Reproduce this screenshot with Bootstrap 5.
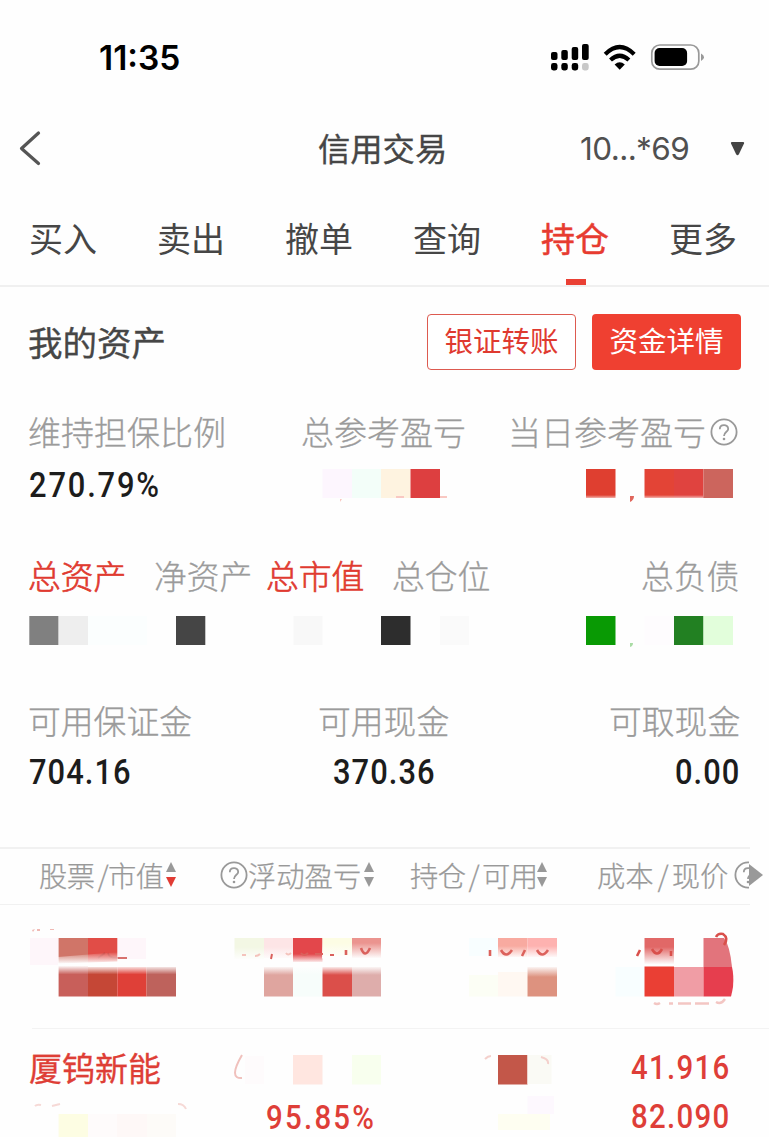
<!DOCTYPE html>
<html lang="zh-CN">
<head>
<meta charset="utf-8">
<meta name="viewport" content="width=device-width, initial-scale=1">
<title>信用交易</title>
<link href="https://cdn.jsdelivr.net/npm/bootstrap@5.3.0/dist/css/bootstrap.min.css" rel="stylesheet">
<style>
  body { font-family: "Noto Sans CJK SC", sans-serif; background: #fefefe; color: #464646; height: 1137px; overflow: hidden; line-height: 1.2; }
  svg { display: block; flex: none; }
  .status { height: 116px; padding: 0 64px 0 99px; color: #000; }
  .clock { font: 600 33.5px/1 Inter, sans-serif; letter-spacing: 0; padding-top: 2px; }
  .topbar { height: 64px; display: grid; grid-template-columns: 318px 262px 150px 1fr; align-items: center; }
  .topbar h1 { font-size: 32.3px; margin: 0; font-weight: 400; -webkit-text-stroke: .35px; line-height: 1.2; padding-bottom: 2px; }
  .account { font: 400 31.5px/1 Inter, sans-serif; letter-spacing: -.6px; padding-top: 2px; color: #505050; }
  .tabs { height: 107px; padding: 12px 0 0 29px; border-bottom: 2px solid #f0f0f0; font-size: 34px; display: grid; grid-template-columns: repeat(6, 128px); align-items: center; }
  .tabs a { color: inherit; text-decoration: none; position: relative; white-space: nowrap; }
  .tabs a.active { color: #e73b30; -webkit-text-stroke: .5px; }
  .tabs a.active::after { content: ""; position: absolute; left: 25px; top: 61px; width: 20px; height: 6px; background: #ea4034; }
  .asset-head { height: 109px; padding: 0 28px 0 28px; }
  .asset-head h2 { font-size: 34.5px; margin: 0; font-weight: 400; -webkit-text-stroke: .35px; }
  .btn-act { height: 56px; width: 149px; font-size: 28.5px; line-height: 1; padding: 0 0 2px; border-radius: 4px; white-space: nowrap; }
  .btn-line { border: 1px solid #dd5a50; color: #df3a30; background: #fff; }
  .btn-fill { border: 0; color: #fff; background: #ef4031; }
  .labels { display: grid; align-items: center; font-size: 33px; font-weight: 300; -webkit-text-stroke: .3px; color: #9b9b9b; white-space: nowrap; height: 48px; }
  .labels .on { color: #e03a30; -webkit-text-stroke: .65px; }
  .l1 { height: 72px; grid-template-columns: 28px 273px 207px 1fr; }
  .l2 { margin-top: 51px; padding-bottom: 5px; grid-template-columns: 28px 126px 112px 126px 249px 1fr; font-size: 32.8px; }
  .l3 { margin-top: 38px; padding-bottom: 3px; grid-template-columns: 28px 290px 291px 1fr; font-size: 32.8px; }
  .num { font-family: Roboto, sans-serif; font-weight: 500; font-size: 35.5px; line-height: 1; letter-spacing: 1.2px; color: #1c1c1c; display: inline-block; transform: scaleX(.87); transform-origin: 0 50%; white-space: nowrap; }
  .num.pct { letter-spacing: 2.1px; }
  .num.red { color: #de3e38; font-size: 33.8px; letter-spacing: 1.5px; }
  .num.red.pct { letter-spacing: 2.6px; }
  .v1 { height: 34px; display: grid; grid-template-columns: 29px 264px 1fr; align-items: center; }
  .v3 { height: 56px; display: grid; grid-template-columns: 29px 304px 342px 1fr; align-items: center; }
  .thead-line { margin-top: 46px; height: 58px; width: 750px; border-top: 2px solid #f1f1f1; border-bottom: 1px solid #f1f1f1; display: grid; grid-template-columns: 39px 181px 190px 187px 170px; align-items: center; padding-bottom: 3px; font-size: 28.3px; font-weight: 300; -webkit-text-stroke: .25px; color: #999; white-space: nowrap; }
  .thead-line .sl { margin: 0 3px 0 4px; }
  .tight .sl { margin: 0 0 0 3px; }
  .tight { letter-spacing: -.6px; }
  .sorter { margin-left: 3px; }
  .hold-a { height: 124px; }
  .rule { height: 1px; margin-left: 32px; background: #f3f3f3; }
  .hold-b { display: grid; grid-template-columns: 29px 201px 401px 1fr; height: 108px; }
  .stock { font-size: 33px; color: #de3e36; -webkit-text-stroke: .3px; white-space: nowrap; line-height: 40px; padding-top: 18px; height: 60px; }
</style>
</head>
<body>
<svg width="0" height="0" class="position-absolute" aria-hidden="true">
  <defs>
    <symbol id="help" viewBox="0 0 28 28"><g fill="none" stroke="#999" stroke-width="1.8"><circle cx="14" cy="14" r="12.6"/><path d="M9.8 11.2C9.8 5.8 18.2 5.8 18.2 10.9C18.2 13.7 14 14 14 18"/></g><circle cx="14" cy="21" r="1.3" fill="#999"/></symbol>
    <symbol id="up" viewBox="0 0 10 10"><path d="M5 0L10 10H0Z"/></symbol>
    <symbol id="down" viewBox="0 0 10 10"><path d="M0 0H10L5 10Z"/></symbol>
    <linearGradient id="fadeTop" x2="0" y2="1"><stop offset="0" stop-color="#fefefe"/><stop offset="1" stop-color="#fefefe" stop-opacity="0"/></linearGradient>
    <linearGradient id="fadeBottom" x2="0" y2="1"><stop offset="0" stop-color="#fefefe" stop-opacity="0"/><stop offset="1" stop-color="#fefefe"/></linearGradient>
  </defs>
</svg>

<header>
  <div class="status d-flex align-items-center justify-content-between">
    <span class="clock">11:35</span>
    <svg width="155" height="32" viewBox="550 42 155 32">
      <g><rect x="551" y="52" width="6.5" height="8" rx="2"/><rect x="561.3" y="50" width="6.5" height="10" rx="2"/><rect x="571.7" y="47" width="6.5" height="13" rx="2"/><rect x="582" y="44" width="6.7" height="16" rx="2"/>
      <rect x="551" y="63" width="6.5" height="7.5" rx="2.4"/><rect x="561.3" y="63" width="6.5" height="7.5" rx="2.4"/><rect x="571.7" y="63" width="6.5" height="7.5" rx="2.4"/><rect x="582" y="63" width="6.7" height="7.5" rx="2.4" fill="#c8c8c8"/></g>
      <g fill="none" stroke="#000" stroke-width="4.2"><path d="M605.2 54.2Q619.7 39.8 634.2 54.2"/><path d="M610.5 60Q619.7 51.5 628.9 60"/></g>
      <path d="M614.6 64.5Q619.7 60.2 624.8 64.5L619.7 69.7Z"/>
      <rect x="651.8" y="45" width="47" height="24.2" rx="8" fill="none" stroke="#999" stroke-width="1.7"/>
      <rect x="654.6" y="48" width="32.5" height="18" rx="5"/>
      <path d="M701 53.5Q704 55 704 57.2T701 61Z" fill="#999"/>
    </svg>
  </div>
  <div class="topbar">
    <svg width="50" height="40" viewBox="0 128 50 40"><path d="M38.5 133L21.5 148.5L38.5 163.5" fill="none" stroke="#555" stroke-width="3.2" stroke-linejoin="round" stroke-linecap="round"/></svg>
    <h1>信用交易</h1>
    <span class="account">10...*69</span>
    <svg width="15" height="15" viewBox="0 0 15 15"><path d="M2 1H13Q14.5 1 14 2.5L9 13Q7.500 15.500 6 13L1 2.500Q.5 1 2 1Z" fill="#444"/></svg>
  </div>
  <nav class="tabs">
    <a href="#">买入</a><a href="#">卖出</a><a href="#">撤单</a><a href="#">查询</a><a href="#" class="active">持仓</a><a href="#">更多</a>
  </nav>
</header>

<main>
  <section>
    <div class="asset-head d-flex align-items-center">
      <h2 class="me-auto">我的资产</h2>
      <button class="btn btn-act btn-line me-3">银证转账</button>
      <button class="btn btn-act btn-fill">资金详情</button>
    </div>

    <div class="labels l1"><i></i><span>维持担保比例</span><span>总参考盈亏</span><span class="d-flex align-items-center">当日参考盈亏<svg class="ms-1" width="28" height="28"><use href="#help"/></svg></span></div>
    <div class="v1"><i></i><span class="num pct">270.79%</span>
      <svg width="476" height="34" viewBox="293 469 476 34">
        <path fill="#fdf6fe" d="M322.500 469h29.500v29h-29.500z"/><path fill="#f3fef9" d="M352 469h29v29h-29z"/><path fill="#fef3e0" d="M381 469h29.500v29H381z"/><path fill="#dd3f40" d="M410.500 469H440v29h-29.500z"/>
        <path fill="#f9c8c2" d="M396 496h8v2h-8zM440 496h7v2h-7zM340 499l2 0-2 3z"/>
        <path fill="#df3f30" d="M586 469h29.500v29H586z"/><path fill="#e34436" d="M644.500 469h30v29h-30z"/><path fill="#e0433f" d="M674 469h29.500v29h-29.500z"/><path fill="#cc655d" d="M703.500 469H733v29h-29.500z"/>
        <path fill="url(#fadeBottom)" opacity=".6" d="M586 495h117v3H586z"/>
        <path fill="#e0665c" d="M630 496h4q0 4-4 6z"/>
      </svg>
    </div>

    <div class="labels l2"><i></i><span class="on">总资产</span><span>净资产</span><span class="on">总市值</span><span>总仓位</span><span>总负债</span></div>
    <svg width="769" height="58" viewBox="0 601 769 58">
      <path fill="#808080" d="M29.300 616h29.300v29H29.300z"/><path fill="#eee" d="M58.600 616H88v29H58.600z"/><path fill="#fbfefe" d="M88 616h59v29H88z"/><path fill="#454545" d="M176 616h29.300v29H176z"/>
      <path fill="#f8f8f8" d="M293.500 616h29v29h-29z"/><path fill="#2d2d2d" d="M381 616h29.500v29H381z"/><path fill="#fafafa" d="M440 616h29v29h-29z"/>
      <path fill="#099a04" d="M586 616h29.500v29H586z"/><path fill="#fefcfe" d="M644.500 616H674v29h-29.500z"/><path fill="#228022" d="M674 616h29.500v29H674z"/><path fill="#e2fedb" d="M703.500 616H733v29h-29.500z"/>
      <path fill="#a9dca5" d="M630 643h3q0 3-3 4z"/>
    </svg>

    <div class="labels l3"><i></i><span>可用保证金</span><span>可用现金</span><span>可取现金</span></div>
    <div class="v3"><i></i><span class="num">704.16</span><span class="num">370.36</span><span class="num">0.00</span></div>
  </section>

  <section>
    <div class="thead-line">
      <i></i>
      <span class="d-flex align-items-center tight">股票<span class="sl">/</span>市值<svg class="sorter" width="10" height="25"><use href="#up" width="10" height="10" fill="#999"/><use href="#down" y="15" width="10" height="10" fill="#e13c34"/></svg></span>
      <span class="d-flex align-items-center"><svg width="28" height="28"><use href="#help"/></svg>浮动盈亏<svg class="sorter" width="10" height="25"><use href="#up" width="10" height="10" fill="#999"/><use href="#down" y="15" width="10" height="10" fill="#999"/></svg></span>
      <span class="d-flex align-items-center tight">持仓<span class="sl" style="margin-right:3px">/</span>可用<svg width="10" height="25"><use href="#up" width="10" height="10" fill="#999"/><use href="#down" y="15" width="10" height="10" fill="#999"/></svg></span>
      <span class="d-flex align-items-center">成本<span class="sl">/</span>现价<svg class="ms-1" width="32" height="28"><svg width="17" height="28"><use href="#help" x="2" width="28" height="28"/></svg><path d="M17 3L31 14L17 25Z" fill="#999"/></svg></span>
    </div>

    <div class="hold-a">
      <svg width="769" height="123" viewBox="0 905 769 123">
        <path fill="#fef6fa" d="M30 938h28.600v27H30zM117 938h29v21h-29z"/>
        <path fill="#d07568" d="M58.600 938H88v29H58.600z"/><path fill="#e14d47" d="M88 938h29.300v26H88z"/>
        <path fill="#c85f5a" d="M58.600 967H88v29.500H58.600z"/><path fill="#c54736" d="M88 967h29.300v29.500H88z"/><path fill="#df4038" d="M117.300 967h29.300v29.500h-29.300z"/><path fill="#be625c" d="M146.600 967H176v29.500h-29.400z"/>
        <path d="M98 958l7-5M108 953q1 5 8 5h11" fill="none" stroke="#cb4540" stroke-width="1.6"/>
        <path fill="url(#fadeBottom)" d="M58 957l60-5v12H58z"/><path fill="#fefefe" d="M58 963.500l60-2v4.500H58z"/><path fill="url(#fadeTop)" d="M58 965.500h118v9H58z"/>
        <path fill="#f0b9b4" d="M32 930l3-1-2 3zM37 929h3v2h-3zM50 929h4v1h-4z"/>

        <path fill="#f3f7e4" d="M234.500 938H264v21h-29.500z"/><path fill="#fde5e6" d="M264 938h29v20h-29z"/><path fill="#e3474b" d="M293 938h29.500v24H293z"/><path fill="#fdfde4" d="M322.500 938H352v18h-29.500z"/><path fill="#eb948f" d="M352 938h29v20h-29z"/>
        <path fill="url(#fadeBottom)" d="M234 947h59v13h-59z"/><path fill="url(#fadeBottom)" d="M293 954h30v9h-30z"/><path fill="url(#fadeBottom)" d="M322 943h60v15.500h-60z"/>
        <path fill="#dfa59f" d="M264 967h29v29.500h-29z"/><path fill="#f7fdfb" d="M293 967h29.500v29.500H293z"/><path fill="#db4f4a" d="M322.500 967H352v29.500h-29.500z"/><path fill="#deadab" d="M352 967h29v29.500h-29z"/><path fill="url(#fadeTop)" d="M264 966h118v9H264z"/>
        <path d="M361 948q4 11 9 0M346 950v5" fill="none" stroke="#da615d" stroke-width="2.6"/><path d="M272 954l-1 5M301 953q3 4 7 0M315 954h8M330 955h4" fill="none" stroke="#da615d" stroke-width="2"/><path d="M242 955h4m9 1q3 0 5-2m26-1q2 3 5 0" fill="none" stroke="#f4c3bc" stroke-width="2"/>

        <path fill="#f8feff" d="M469 938h29v18h-29z"/><path fill="#f8aaa0" d="M498 938h29.500v19H498z"/><path fill="#feb2b0" d="M527.500 938H557v19h-29.500z"/><path fill="url(#fadeBottom)" d="M498 946h59v12h-59z"/>
        <path d="M490 950v6M501 950q5 9 11 0M525 950l-3 6M537 950q5 9 11 0" fill="none" stroke="#dc625c" stroke-width="2.6"/>
        <path fill="#fcfef5" d="M469 975h29v21.500h-29z"/><path fill="#fff8f2" d="M498 972h29.500v24.500H498z"/><path fill="#dd927f" d="M527.500 967H557v29.500h-29.500z"/><path fill="url(#fadeTop)" d="M527 966h30v11h-30z"/>

        <path fill="#f8feff" d="M615.500 967h29v29.500h-29z"/><path fill="#e16867" d="M644.500 938H674v26h-29.500z"/><path fill="url(#fadeBottom)" d="M644 947h31v17.500h-31z"/>
        <path fill="#e2747c" d="M703.500 938H724q6 8 8 29h-28.500z"/><path fill="#ea3f34" d="M644.500 966.500H674v30h-29.500z"/><path fill="#f09da5" d="M674 967h29.500v29.500H674z"/><path fill="#e63e4e" d="M703.500 967H732q2 8 1 20-1 6-2 9.500h-27.500z"/>
        <path d="M640 950l-3 6M652 949q5 9 10 0M671 951v5M716 937q2-4 7-3 6 4 1 11" fill="none" stroke="#d9504b" stroke-width="2.6"/>
        <path d="M654 1003q3 2 6 0M669 1003.500h4m5 0h13m4 0h14M716 1002q5 3 9-3" fill="none" stroke="#f3c6c3" stroke-width="2.4"/>
      </svg>
      <div class="rule"></div>
    </div>

    <div class="hold-b">
      <i></i>
      <div>
        <div class="stock">厦钨新能</div>
        <svg width="180" height="48" viewBox="29 1089 180 48"><path fill="#fdfde3" d="M58.600 1114H88v23H58.600z"/><path fill="#fefbfb" d="M88 1114h29v23H88z"/><path fill="#fef8f7" d="M117 1114h30v23h-30z"/><path fill="#fdfbf8" d="M147 1114h29v23h-29z"/><path d="M35 1106q2-2 6-1M52 1106l8-2M178 1104q6 0 8 5" fill="none" stroke="#f6d9d6" stroke-width="2"/></svg>
      </div>
      <div>
        <svg width="400" height="60" viewBox="230 1029 400 60"><path d="M242 1055q-14 24 0 23" fill="none" stroke="#f0c1bd" stroke-width="2"/><path fill="#fefbfc" d="M245 1056h19v28h-19z"/><path fill="#ffe6e0" d="M293 1055h29.500v29.500H293z"/><path fill="#f8ffee" d="M352 1055h29v29.500h-29z"/><path fill="#c35749" d="M498 1055h29.500v29.500H498z"/><path fill="#fafaf5" d="M527.500 1055h24v29h-24z"/><path d="M485 1059q3-3 6-3M541 1057q8 2 7 7" fill="none" stroke="#f4d0cc" stroke-width="2"/></svg>
        <div class="d-flex"><span class="num red pct mt-2 pt-1" style="margin-left:36px">95.85%</span><svg class="ms-auto" width="170" height="46" viewBox="461 1089 170 46"><path fill="#fdf8fe" d="M527.500 1096H554v18h-26.500z"/><path fill="#fefef1" d="M498 1114h52v16h-52z"/></svg></div>
      </div>
      <div>
        <span class="num red" style="margin-top:22px">41.916</span>
        <span class="num red" style="margin-top:15px">82.090</span>
      </div>
    </div>
  </section>
</main>
<script src="https://cdn.jsdelivr.net/npm/bootstrap@5.3.0/dist/js/bootstrap.bundle.min.js"></script>
</body>
</html>
